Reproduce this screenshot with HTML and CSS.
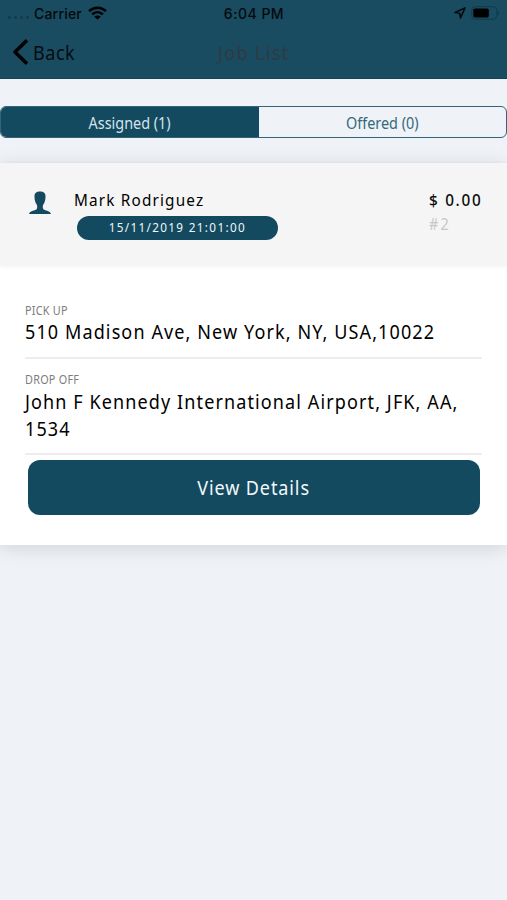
FILE: index.html
```html
<!DOCTYPE html>
<html lang="en">
<head>
<meta charset="utf-8">
<title>Job List</title>
<link rel="stylesheet" href="styles.css">
</head>
<body>
<header class="header">
  <div class="status">
    <div class="status-left">
      <span class="dots"><i></i><i></i><i></i><i></i></span>
      <span class="carrier">Carrier</span>
      <svg class="wifi" width="19" height="14" viewBox="0 0 18 14" preserveAspectRatio="none" fill="none" stroke="#000" stroke-width="2.5"><path d="M1 5.200C5.600.6 12.400.6 17 5.200M3.900 8.300c3-2.900 7.200-2.900 10.200 0"/><path d="M9 13.600 5.900 10.700c1.800-1.600 4.400-1.600 6.200 0z" fill="#000" stroke="none"/></svg>
    </div>
    <span class="clock">6:04 PM</span>
    <div class="status-right">
      <svg width="12" height="12" viewBox="0 0 12 12" fill="none" stroke="#030b0f" stroke-width="1.6" stroke-linejoin="round"><path d="M11 1 1 5.500l4.700.8.8 4.700z"/></svg>
      <svg width="29" height="14" viewBox="0 0 29 14"><rect x=".7" y=".7" width="25" height="12.600" rx="3.500" fill="none" stroke="#123b4c"/><rect x="2.300" y="2.500" width="15.500" height="9" rx="1.800" fill="#000"/><path d="M26.500 4.500c2.300 1 2.300 4 0 5z" fill="#123b4c"/></svg>
    </div>
  </div>
  <nav class="nav">
    <a class="back"><svg width="17" height="28" viewBox="0 0 17 28" fill="none" stroke="#000" stroke-width="3.600" stroke-linejoin="round"><path d="M15 2.300 3 14l12 11.700"/></svg><span class="back-label">Back</span></a>
    <h1 class="title">Job List</h1>
    <span></span>
  </nav>
</header>
<div class="tabs">
  <div class="tab active"><span>Assigned (1)</span></div>
  <div class="tab"><span>Offered (0)</span></div>
</div>
<main class="card">
  <section class="summary">
    <svg class="person" width="22" height="24" viewBox="0 0 22 24" fill="#134a60"><path d="M11 .5c3.700 0 5.600 1.600 5.500 5 0 3.500-.7 6-2.300 8.300-.6.900-.6 3.700.2 4.500 1.700 1.400 7.100 1.500 7.500 4.700H.1c.4-3.200 5.800-3.300 7.500-4.700.8-.8.800-3.600.2-4.500C6.200 11.500 5.500 9 5.500 5.500 5.400 2.100 7.300.5 11 .5z"/></svg>
    <div class="who">
      <div class="name">Mark Rodriguez</div>
      <div class="date"><span>15/11/2019 21:01:00</span></div>
    </div>
    <div class="fare">
      <div class="price">$ 0.00</div>
      <div class="number">#2</div>
    </div>
  </section>
  <section class="trip">
    <div class="stop">
      <div class="label">PICK UP</div>
      <div class="address">510 Madison Ave, New York, NY, USA,10022</div>
    </div>
    <div class="stop">
      <div class="label">DROP OFF</div>
      <div class="address">John F Kennedy International Airport, JFK, AA, 1534</div>
    </div>
    <button class="details"><span>View Details</span></button>
  </section>
</main>
</body>
</html>
```
FILE: styles.css
```css
* { box-sizing: border-box; }
body {
  margin: 0;
  height: 900px;
  background: #eff3f8;
  color: #0c0c0c;
  font-family: "Noto Sans", "Open Sans", sans-serif;
  overflow: hidden;
}
.header { height: 79px; background: #194c60; border-bottom: 1px solid #174357; }
.status {
  height: 26px;
  display: grid;
  grid-template-columns: 1fr auto 1fr;
  align-items: center;
  padding: 0 7px 0 8px;
  font-family: Inter, sans-serif;
  font-size: 14px;
  font-weight: 500;
  color: #03090c;
}
.status-left { display: flex; align-items: center; }
.dots { display: flex; gap: 3px; width: 26px; padding-top: 8px; }
.dots i { width: 3px; height: 3px; border-radius: 50%; background: #123b4c; }
.carrier { letter-spacing: .2px; }
.wifi { margin-left: 6px; }
.clock { letter-spacing: .5px; }
.status-right { display: flex; justify-content: flex-end; align-items: center; gap: 5px; }
.nav {
  height: 52px;
  display: grid;
  grid-template-columns: 1fr auto 1fr;
  align-items: center;
  padding: 0 12px;
}
.back { display: flex; align-items: center; gap: 4px; font-size: 20px; color: #050c10; }
/* Condensed text: glyphs are narrowed and tracking is opened up. */
.back-label, .title, .tab span, .name, .date span, .price, .number,
.label, .address, .details span {
  display: inline-block;
  transform: scaleX(.9);
  transform-origin: left center;
}
.back-label { letter-spacing: .6px; }
.title { margin: 1px 0 0; font-size: 20px; font-weight: 400; letter-spacing: 1.5px; color: #2f3a44; transform-origin: center; }
.tabs {
  display: flex;
  height: 32px;
  margin: 27px 0 25px;
  border: 1px solid #356477;
  border-radius: 6px;
  overflow: hidden;
  font-size: 16px;
  color: #34697b;
}
.tab { flex: 247; display: flex; align-items: center; justify-content: center; letter-spacing: 0; }
.tab span { transform-origin: center; padding-top: 1px; }
.active { flex: 258; background: #134a60; color: #d5e3eb; }
.card { height: 382px; background: #fff; box-shadow: 0 3px 18px rgba(0, 0, 0, .13); }
.summary {
  display: flex;
  height: 102px;
  padding: 25px 25px 0 29px;
  background: #f5f5f5;
  box-shadow: 0 1px 4px rgba(0, 0, 0, .07);
}
.person { margin-top: 3px; }
.who { margin-left: 23px; flex: 1; }
.name { display: block; height: 28px; line-height: 24px; font-size: 17px; letter-spacing: 1.3px; color: #000; }
.date {
  width: 201px;
  height: 24px;
  margin-left: 3px;
  border-radius: 12px;
  background: #134a60;
  color: #f2f7f9;
  text-align: center;
  font-size: 13px;
  line-height: 23px;
  letter-spacing: 1.5px;
  white-space: nowrap;
}
.date span { transform-origin: center; }
.fare { width: 53px; white-space: nowrap; }
.price { display: block; line-height: 24px; font-size: 17px; font-weight: 500; letter-spacing: 1.9px; }
.number { display: block; line-height: 24px; font-size: 16px; color: #c7c7c7; letter-spacing: 2.5px; }
.trip { padding: 30px 25px 0; }
.stop { border-bottom: 2px solid #ededed; padding: 8px 0 11px; }
.label { display: block; height: 16px; line-height: 16px; font-size: 12px; color: #7d7d7d; letter-spacing: .3px; }
.address { display: block; width: 111%; line-height: 26px; height: 27px; font-size: 20px; letter-spacing: 1.24px; color: #000; }
.stop + .stop { padding-top: 13px; padding-bottom: 11px; }
.stop + .stop .address { height: 54px; line-height: 27px; }
.details {
  display: block;
  width: 452px;
  height: 55px;
  margin: 5px 0 0 3px;
  padding: 0;
  border: 0;
  border-radius: 12px;
  background: #134a60;
  color: #f2f8fb;
  font: inherit;
  font-size: 20px;
  letter-spacing: 1px;
}
.details span { transform-origin: center; }
```
